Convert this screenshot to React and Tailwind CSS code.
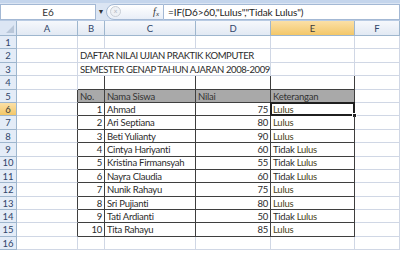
import React from "react";

const cols = ["A", "B", "C", "D", "E", "F"];
const grid = "grid grid-cols-[17px_61px_27px_91px_75px_84px_45px]";

const data = [
  [1, "Ahmad", 75],
  [2, "Ari Septiana", 80],
  [3, "Beti Yulianty", 90],
  [4, "Cintya Hariyanti", 60],
  [5, "Kristina Firmansyah", 55],
  [6, "Nayra Claudia", 60],
  [7, "Nunik Rahayu", 75],
  [8, "Sri Pujianti", 80],
  [9, "Tati Ardianti", 50],
  [10, "Tita Rahayu", 85],
];

const RowHead = ({ n }) => (
  <div
    className={
      "flex items-center justify-center border-r border-b border-[#9eb6ce] pt-[1px] text-[9.5px] tracking-normal " +
      (n === 6
        ? "bg-gradient-to-b from-[#fbe0a6] to-[#f3c768] text-[#3b3b3b]"
        : "bg-[#e4ecf7] text-[#30456a]")
    }
  >
    {n}
  </div>
);

const Cell = ({ className = "", children }) => (
  <div className={"flex items-center whitespace-nowrap px-[2px] pt-[1px] border-r border-b " + className}>
    {children}
  </div>
);

const Ket = ({ nilai }) =>
  nilai > 60 ? (
    <span className="text-[#4a4320]">Lulus</span>
  ) : (
    <span>
      Tidak <span className="text-[#4a4320]">Lulus</span>
    </span>
  );

export default function App() {
  const rows = [];
  for (let r = 1; r <= 16; r++) {
    const inTable = r >= 5 && r <= 15;
    const g = "border-[#d0d7e5]";
    const d = "border-[#3f3f3f]";
    const topEdge = r === 4 ? d : g;
    let cells;
    if (r === 2 || r === 3) {
      cells = (
        <>
          <Cell className={g} />
          <Cell className={"col-span-3 tracking-[-0.4px] " + g}>
            {r === 2 ? "DAFTAR NILAI UJIAN PRAKTIK KOMPUTER" : "SEMESTER GENAP TAHUN AJARAN 2008-2009"}
          </Cell>
          <Cell className={g} />
          <Cell className={g} />
        </>
      );
    } else if (r === 5) {
      cells = (
        <>
          <Cell className={"border-b-[#d0d7e5] border-r-[#3f3f3f]"} />
          <Cell className={"bg-[#a9a9a9] text-[#333] " + d}>No.</Cell>
          <Cell className={"bg-[#a9a9a9] text-[#333] " + d}>Nama Siswa</Cell>
          <Cell className={"bg-[#a9a9a9] text-[#333] " + d}>Nilai</Cell>
          <Cell className={"bg-[#a9a9a9] text-[#333] " + d}>Keterangan</Cell>
          <Cell className={g} />
        </>
      );
    } else if (inTable) {
      const [no, nama, nilai] = data[r - 6];
      cells = (
        <>
          <Cell className={"border-b-[#d0d7e5] border-r-[#3f3f3f]"} />
          <Cell className={"justify-end " + d}>{no}</Cell>
          <Cell className={d}>{nama}</Cell>
          <Cell className={"justify-end " + d}>{nilai}</Cell>
          <Cell className={"relative " + d}>
            <Ket nilai={nilai} />
            {r === 6 && (
              <>
                <div className="pointer-events-none absolute -left-[1px] -top-[1px] -right-[1px] -bottom-[1px] border-2 border-[#1f1f1f]" />
                <div className="absolute -right-[3px] -bottom-[3px] h-[5px] w-[5px] border border-white bg-[#1f1f1f]" />
              </>
            )}
          </Cell>
          <Cell className={g} />
        </>
      );
    } else {
      cells = cols.map((c, i) => (
        <Cell key={c} className={(i >= 1 && i <= 4 ? topEdge : g)} />
      ));
    }
    rows.push(
      <div key={r} className={grid + " h-[13.4px]"}>
        <RowHead n={r} />
        {cells}
      </div>
    );
  }

  return (
    <div className="h-[253px] w-[400px] overflow-hidden bg-white font-['Lato','Open_Sans',sans-serif] text-[9.5px] tracking-[-0.25px] leading-none text-[#2b2b2b]">
      <div className="h-[3px] bg-[#c4d5ec]" />
      <div className="flex h-[18px] items-center bg-[#dbe5f3] border-b border-[#b9cbe3] tracking-normal">
        <div className="flex h-[16px] w-[96px] items-center justify-center border border-[#a3b8d4] bg-white text-[10px] text-[#333]">
          E6
        </div>
        <div className="flex w-[10px] justify-center text-[7px] text-[#333]">▼</div>
        <div className="flex h-[16px] w-[58px] items-center justify-between rounded-l-full border border-[#a3b8d4] bg-gradient-to-b from-white to-[#e8eef7] pl-[3px] pr-[4px]">
          <div className="flex h-[11px] w-[11px] items-center justify-center rounded-full border border-[#c8ced6] bg-[#eef1f5] text-[7px] text-[#b0b6bf]">
            ×
          </div>
          <span className="font-['Liberation_Serif',serif] text-[10px] italic text-[#333]">
            f<sub className="text-[7px]">x</sub>
          </span>
        </div>
        <div className="flex h-[16px] flex-1 items-center border border-l-0 border-[#a3b8d4] bg-white pl-[4px] text-[10px] tracking-[-0.1px] text-[#222]">
          =IF(D6&gt;60,"Lulus","Tidak Lulus")
        </div>
      </div>
      <div className={grid + " h-[15px] text-[9.5px] tracking-normal"}>
        <div className="relative border-r border-b border-[#9eb6ce] bg-[#dce6f4]">
          <div className="absolute bottom-[2px] right-[2px] h-0 w-0 border-b-[8px] border-l-[8px] border-b-[#b9c7d9] border-l-transparent" />
        </div>
        {cols.map((c) => (
          <div
            key={c}
            className={
              "flex items-center justify-center border-r border-b border-[#9eb6ce] pt-[1px] " +
              (c === "E"
                ? "bg-gradient-to-b from-[#fbe0a6] to-[#f3c768] text-[#3b3b3b]"
                : "bg-gradient-to-b from-[#f6f8fc] to-[#e2e9f3] text-[#30456a]")
            }
          >
            {c}
          </div>
        ))}
      </div>
      {rows}
    </div>
  );
}
